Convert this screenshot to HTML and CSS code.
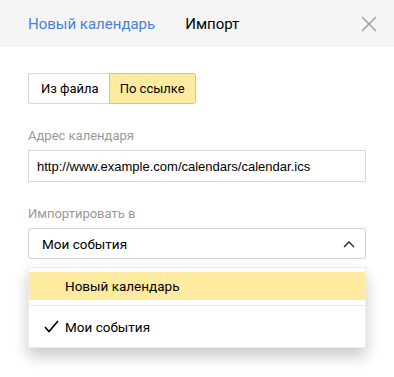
FILE: index.html
```html
<!DOCTYPE html>
<html lang="ru">
<head>
    <meta charset="UTF-8">
    <meta name="viewport" content="width=device-width, initial-scale=1.0">
    <title>Импорт</title>
    <link rel="stylesheet" href="styles.css">
</head>
<body>
    <div class="header">
        <a class="tab tab-link" href="#">Новый календарь</a>
        <span class="tab tab-active">Импорт</span>
        <button class="close" aria-label="Закрыть">
            <svg width="16" height="16" viewBox="0 0 16 16">
                <path d="M1 1L15 15M15 1L1 15" stroke="#a3a3a3" stroke-width="1.6" fill="none"/>
            </svg>
        </button>
    </div>

    <div class="content">
        <div class="switch">
            <button class="switch-btn">Из файла</button>
            <button class="switch-btn switch-btn-on">По ссылке</button>
        </div>

        <div class="field">
            <div class="field-label">Адрес календаря</div>
            <input class="text-input" type="text" value="http://www.example.com/calendars/calendar.ics">
        </div>

        <div class="field">
            <div class="field-label">Импортировать в</div>
            <div class="select">
                <span>Мои события</span>
                <svg width="12" height="8" viewBox="0 0 12 8">
                    <path d="M1 7L6 2L11 7" stroke="#222" stroke-width="1.3" fill="none"/>
                </svg>
            </div>
            <div class="menu">
                <div class="menu-item menu-item-hover">Новый календарь</div>
                <div class="menu-sep"></div>
                <div class="menu-item menu-item-checked">
                    <svg class="check" width="15" height="13" viewBox="0 0 15 13">
                        <path d="M1 7L5 11.5L14 1" stroke="#000" stroke-width="1.6" fill="none"/>
                    </svg>
                    <span>Мои события</span>
                </div>
            </div>
        </div>
    </div>
</body>
</html>
```

FILE: styles.css
```css
body {
    margin: 0;
    font-family: Roboto, "Noto Sans", sans-serif;
    font-size: 13.5px;
    color: #000;
    background: #fff;
}
.header {
    height: 47px;
    background-color: #f5f5f5;
    display: flex;
    align-items: center;
    padding: 0 0 0 28px;
}
.tab {
    font-size: 15px;
    margin-right: 30px;
}
.tab-link {
    color: #4a80d8;
    text-decoration: none;
}
.tab-active {
    color: #000;
}
.close {
    margin-left: auto;
    margin-right: 17px;
    border: none;
    background: none;
    padding: 0;
    display: flex;
}
.content {
    padding: 26px 28px 30px;
}
.switch {
    display: flex;
    height: 31px;
}
.switch-btn {
    font-family: inherit;
    font-size: 13px;
    color: #000;
    background: #fff;
    border: 1px solid #d6d6d6;
    padding: 0 10px;
    white-space: nowrap;
    cursor: pointer;
}
.switch-btn:first-child {
    border-radius: 3px 0 0 3px;
    border-right: none;
    padding-left: 12px;
}
.switch-btn-on {
    background-color: #ffeba0;
    border-color: #e2c46d;
    border-radius: 0 3px 3px 0;
}
.field {
    margin-top: 23px;
}
.field-label {
    color: #999;
    font-size: 13px;
    line-height: 18px;
    margin-bottom: 5px;
}
.text-input {
    box-sizing: border-box;
    display: block;
    width: 100%;
    height: 32px;
    border: 1px solid #d9d9d9;
    padding: 0 8px;
    font-family: "Liberation Sans", Arial, sans-serif;
    font-size: 13px;
    color: #000;
}
.select {
    box-sizing: border-box;
    height: 31px;
    border: 1px solid #d0d0d0;
    border-radius: 3px;
    display: flex;
    align-items: center;
    justify-content: space-between;
    padding: 0 10px 0 13px;
}
.menu {
    margin: 8px 0 0 0;
    background: #fff;
    border: 1px solid #ececec;
    padding-top: 4px;
    box-shadow: 0 8px 14px rgba(0, 0, 0, 0.22);
}
.menu-item {
    height: 28px;
    display: flex;
    align-items: center;
    padding-left: 36px;
}
.menu-item-hover {
    background-color: #ffeba0;
}
.menu-sep {
    height: 1px;
    background: #e8e8e8;
    margin-top: 5px;
}
.menu-item-checked {
    height: 41px;
    padding-left: 15px;
}
.check {
    margin-right: 6px;
}
```
